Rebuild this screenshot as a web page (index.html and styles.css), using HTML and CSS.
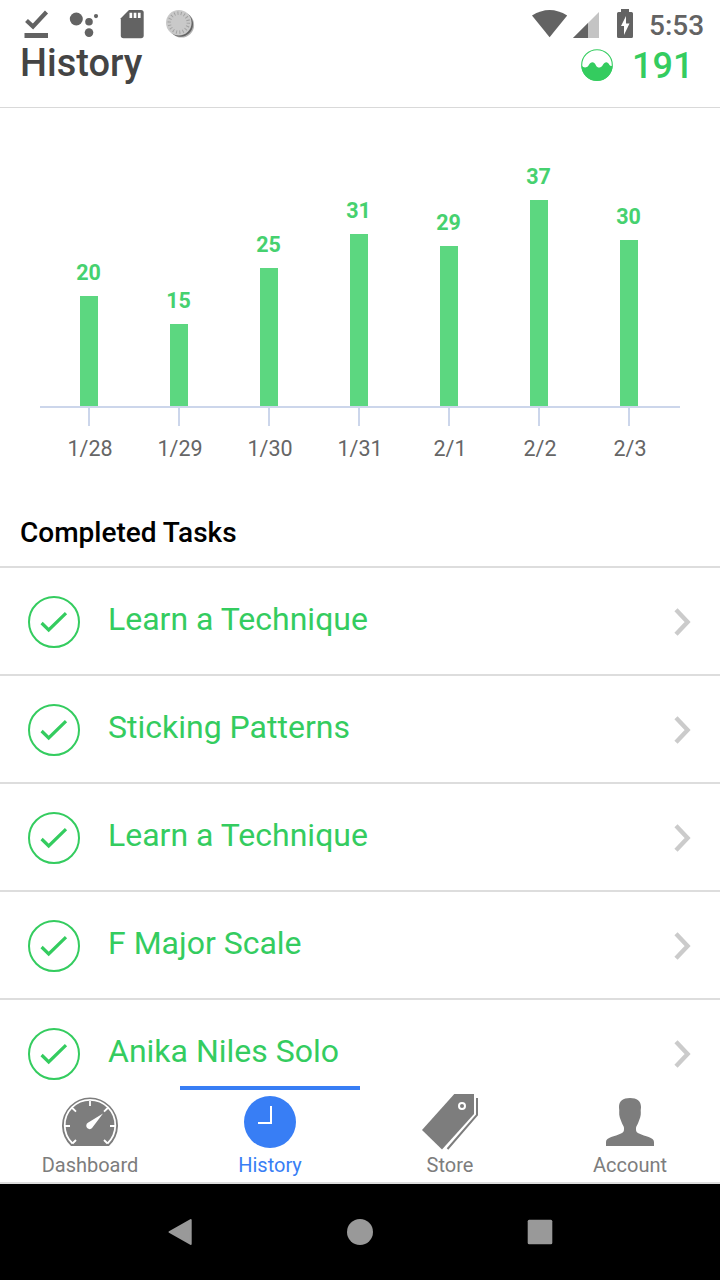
FILE: index.html
```
<!DOCTYPE html>
<html lang="en">
<head>
    <meta charset="UTF-8">
    <meta name="viewport" content="width=device-width, initial-scale=1.0">
    <title>History</title>
    <link rel="stylesheet" href="styles.css">
</head>
<body>
    <svg width="0" height="0" class="defs">
        <symbol id="check" viewBox="0 0 52 52">
            <circle cx="26" cy="26" r="25" fill="none" stroke="#34cc5f" stroke-width="2"/>
            <path d="M13.6 27L20.700 34L38 17.2" fill="none" stroke="#34cc5f" stroke-width="3.2"/>
        </symbol>
        <symbol id="arrow" viewBox="0 0 18 30">
            <path d="M3 2.800L14.6 15L3 27.200" fill="none" stroke="#cbcbcb" stroke-width="4.4"/>
        </symbol>
    </svg>
    <div id="app">
        <div class="status-bar">
            <div class="status-left">
                <svg viewBox="12 0 48 48">
                    <path d="M26.5 20.5L33 26.5L46.5 12" fill="none" stroke="#636363" stroke-width="4.2"/>
                    <rect x="24.5" y="33" width="23.5" height="5" fill="#636363"/>
                </svg>
                <svg viewBox="60 0 48 48" fill="#636363">
                    <circle cx="76.3" cy="19" r="6.5"/>
                    <circle cx="89" cy="21.7" r="3.8"/>
                    <circle cx="96" cy="16.1" r="2.1"/>
                    <circle cx="89" cy="32.6" r="4.3"/>
                </svg>
                <svg viewBox="108 0 48 48">
                    <path d="M129 10H141Q143.7 10 143.7 12.6V35.5Q143.7 38.2 141 38.2H123.5Q120.8 38.2 120.8 35.5V18.3Z" fill="#636363"/>
                    <path d="M129.5 12.7h2.7v5.3h-2.7zM133.7 12.7h2.7v5.3h-2.7zM137.9 12.7h2.7v5.3h-2.7z" fill="#fff"/>
                </svg>
                <svg viewBox="156 0 48 48">
                    <circle cx="181.5" cy="25" r="12.6" fill="#b4b4b4"/>
                    <circle cx="180.5" cy="24.2" r="12.5" fill="#636363"/>
                    <circle cx="178.8" cy="22.7" r="12.8" fill="#c9c9c9"/>
                    <circle cx="178.8" cy="22.7" r="9.5" fill="none" stroke="#a2a2a2" stroke-width="3.5" stroke-dasharray="1 2.317"/>
                </svg>
            </div>
            <div class="status-right">
                <svg width="36" height="48" viewBox="532 0 36 48">
                    <path d="M532 15.5Q549.6 4.5 567.2 15.5L549.6 37.2Z" fill="#636363"/>
                </svg>
                <svg width="27" height="48" viewBox="573 0 27 48">
                    <path d="M573 38L599 12V38Z" fill="#c4c4c4"/>
                    <path d="M573 38L588 23V38Z" fill="#636363"/>
                </svg>
                <svg class="battery" width="17" height="48" viewBox="617 0 17 48">
                    <path d="M621 9h8v3h2.5q1.5 0 1.5 1.5v23q0 1.5 -1.5 1.5h-13q-1.5 0 -1.5 -1.5v-23q0 -1.5 1.5 -1.5h2.5z" fill="#636363"/>
                    <path d="M626 16L621 26H624V35L629.5 23.5H626Z" fill="#fff"/>
                </svg>
                <span class="time">5:53</span>
            </div>
        </div>

        <div class="header">
            <h1>History</h1>
            <div class="score">
                <svg width="32" height="32" viewBox="0 0 32 32">
                    <circle cx="16" cy="16" r="15.3" fill="none" stroke="#34cc5f" stroke-width="1.1"/>
                    <path d="M.5 16.5C2.5 19 5.500 19.300 7.500 16.500C10 12.300 13 12.300 15 16.500C16.500 19.300 19.500 19.300 21.500 16.500C24 12.300 26.500 12.300 28.500 16C29.300 17.300 30.500 17.300 31.500 16.500A15.500 15.500 0 0 1 .5 16.500Z" fill="#34cc5f"/>
                </svg>
                <span>191</span>
            </div>
        </div>

        <div class="chart">
            <div class="bars">
                <div class="bar-col"><span>20</span><div class="bar" style="height: 110px"></div></div>
                <div class="bar-col"><span>15</span><div class="bar" style="height: 82px"></div></div>
                <div class="bar-col"><span>25</span><div class="bar" style="height: 138px"></div></div>
                <div class="bar-col"><span>31</span><div class="bar" style="height: 172px"></div></div>
                <div class="bar-col"><span>29</span><div class="bar" style="height: 160px"></div></div>
                <div class="bar-col"><span>37</span><div class="bar" style="height: 206px"></div></div>
                <div class="bar-col"><span>30</span><div class="bar" style="height: 166px"></div></div>
            </div>
            <div class="labels">
                <div>1/28</div>
                <div>1/29</div>
                <div>1/30</div>
                <div>1/31</div>
                <div>2/1</div>
                <div>2/2</div>
                <div>2/3</div>
            </div>
        </div>

        <h2>Completed Tasks</h2>
        <div class="tasks">
            <div class="task">
                <svg class="check"><use href="#check"/></svg>
                <span>Learn a Technique</span>
                <svg class="arrow"><use href="#arrow"/></svg>
            </div>
            <div class="task">
                <svg class="check"><use href="#check"/></svg>
                <span>Sticking Patterns</span>
                <svg class="arrow"><use href="#arrow"/></svg>
            </div>
            <div class="task">
                <svg class="check"><use href="#check"/></svg>
                <span>Learn a Technique</span>
                <svg class="arrow"><use href="#arrow"/></svg>
            </div>
            <div class="task">
                <svg class="check"><use href="#check"/></svg>
                <span>F Major Scale</span>
                <svg class="arrow"><use href="#arrow"/></svg>
            </div>
            <div class="task">
                <svg class="check"><use href="#check"/></svg>
                <span>Anika Niles Solo</span>
                <svg class="arrow"><use href="#arrow"/></svg>
            </div>
        </div>

        <div class="tabs">
            <div class="tab">
                <svg viewBox="0 0 60 60">
                    <path d="M11 56A28 28 0 1 1 49 56Z" fill="#7d7d7d"/>
                    <path d="M12.5 53.5A25.3 25.3 0 1 1 47.5 53.5M12.5 53.5L16 50M47.5 53.5L44 50M4.7 36H10M50 36H55.3M30 11V16M12.3 18L16 21.7M47.7 18L44 21.7" fill="none" stroke="#fff" stroke-width="1.8"/>
                    <path d="M43 23.5L32.8 37A3.4 3.4 0 1 1 27.9 32.8Z" fill="#fff"/>
                </svg>
                <span>Dashboard</span>
            </div>
            <div class="tab active">
                <svg viewBox="0 0 60 60">
                    <circle cx="30" cy="32" r="26" fill="#387ef5"/>
                    <path d="M31 16V33H18" fill="none" stroke="#fff" stroke-width="2"/>
                </svg>
                <span>History</span>
            </div>
            <div class="tab">
                <svg viewBox="0 0 60 60">
                    <path d="M34.3 4H54V24L22 59.5L2 40Z" fill="#7d7d7d"/>
                    <circle cx="42" cy="16" r="3" fill="none" stroke="#fff" stroke-width="2"/>
                    <path d="M57 8V25L27.5 59" fill="none" stroke="#7d7d7d" stroke-width="2"/>
                </svg>
                <span>Store</span>
            </div>
            <div class="tab">
                <svg viewBox="0 0 60 60">
                    <path d="M30 8C37 8 41 11 41 17C41 19 40.5 20 40.8 22C41.2 26 39.5 29 38.5 32C37.5 35 36 36 36 38C36 41 36 42 39 43.5C45 46.5 54 47 54 52V56H6V52C6 47 15 46.5 21 43.5C24 42 24 41 24 38C24 36 22.5 35 21.5 32C20.5 29 18.8 26 19.2 22C19.5 20 19 19 19 17C19 11 23 8 30 8Z" fill="#7d7d7d"/>
                </svg>
                <span>Account</span>
            </div>
        </div>

        <div class="nav-bar">
            <svg viewBox="0 0 48 48"><path d="M13.5 24L34.7 12V36Z" fill="#999" stroke="#999" stroke-width="2" stroke-linejoin="round"/></svg>
            <svg viewBox="0 0 48 48"><circle cx="24" cy="24" r="13" fill="#999"/></svg>
            <svg viewBox="0 0 48 48"><rect x="11.7" y="11.7" width="24.6" height="24.6" rx="1.5" fill="#999"/></svg>
        </div>
    </div>
</body>
</html>
```
FILE: styles.css
```
* {
    box-sizing: border-box;
}

body {
    margin: 0;
    font-family: Roboto, sans-serif;
    background: #fff;
}

.defs {
    display: none;
}

#app {
    width: 720px;
    height: 1280px;
    display: flex;
    flex-direction: column;
    overflow: hidden;
}

.status-bar {
    height: 40px;
    flex: none;
    display: flex;
    justify-content: space-between;
    padding: 0 16px 0 12px;
}

.status-left, .status-right {
    display: flex;
    height: 48px;
}

.status-left svg {
    width: 48px;
    height: 48px;
}

.status-right {
    gap: 5px;
}

.status-right .battery {
    margin-left: 12px;
}

.time {
    width: 55px;
    margin-left: 10px;
    font-size: 28px;
    font-weight: 500;
    line-height: 52px;
    color: #636363;
}

.header {
    height: 68px;
    flex: none;
    display: flex;
    justify-content: space-between;
    padding: 0 26px 0 20px;
    border-bottom: 1px solid #d9d9d9;
}

h1 {
    margin: 0;
    font-size: 38px;
    font-weight: 500;
    line-height: 46px;
    color: #444;
}

.score {
    display: flex;
    gap: 19px;
    font-size: 36px;
    font-weight: 500;
    line-height: 52px;
    color: #34cc5f;
}

.score span {
    width: 62px;
}

.score svg {
    margin-top: 9px;
}

.chart {
    height: 398px;
    flex: none;
    padding: 0 40px;
}

.bars {
    height: 300px;
    display: flex;
    padding-left: 4px;
    border-bottom: 2px solid #ccd6eb;
}

.bar-col {
    width: 90px;
    display: flex;
    flex-direction: column;
    align-items: center;
    justify-content: flex-end;
}

.bar-col span {
    margin: 0 1px 10px 0;
    font-size: 21.5px;
    font-weight: 700;
    line-height: 26px;
    color: #46d16f;
}

.bar {
    width: 18px;
    background: #5cd780;
}

.labels {
    display: flex;
    padding-left: 4px;
}

.labels div {
    width: 90px;
    padding: 9px 0 0 2px;
    font-size: 21.5px;
    line-height: 28px;
    text-align: center;
    color: #666;
}

/* axis tick */
.labels div::before {
    content: "";
    display: block;
    width: 2px;
    height: 18px;
    margin: -9px 0 9px 42px;
    background: #ccd6eb;
}

h2 {
    height: 60px;
    flex: none;
    margin: 0;
    padding-left: 20px;
    font-size: 28px;
    font-weight: 500;
    line-height: 54px;
    color: #000;
}

.tasks {
    height: 520px;
    flex: none;
    overflow: hidden;
}

.task {
    height: 108px;
    display: flex;
    padding: 28px 29px 0 28px;
    border-top: 2px solid #ddd;
}

.task span {
    flex: 1;
    margin-left: 28px;
    font-size: 32px;
    line-height: 46px;
    color: #34cc5f;
}

.check {
    width: 52px;
    height: 52px;
}

.arrow {
    width: 18px;
    height: 30px;
    margin-top: 11px;
}

.tabs {
    height: 98px;
    flex: none;
    display: flex;
    border-bottom: 2px solid #ddd;
}

.tab {
    width: 180px;
    display: flex;
    flex-direction: column;
    align-items: center;
    border-top: 4px solid transparent;
    font-size: 20px;
    line-height: 30px;
    color: #7d7d7d;
}

.tab svg {
    width: 60px;
    height: 60px;
}

.tab.active {
    border-color: #387ef5;
    color: #387ef5;
}

.nav-bar {
    height: 96px;
    flex: none;
    display: flex;
    justify-content: center;
    align-items: center;
    gap: 132px;
    background: #000;
}

.nav-bar svg {
    width: 48px;
    height: 48px;
}
```
